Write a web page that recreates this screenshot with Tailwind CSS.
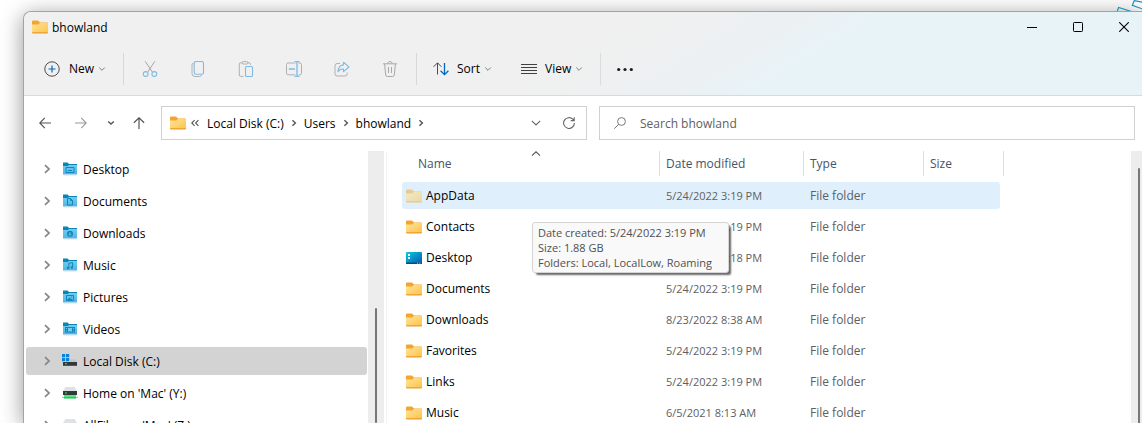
<!DOCTYPE html>
<html lang="en">
<head>
<meta charset="utf-8">
<title>bhowland</title>
<script src="https://cdn.jsdelivr.net/npm/@tailwindcss/browser@4"></script>
</head>
<body class="relative h-screen overflow-hidden bg-white pl-[23px] pt-[11px] font-['Open_Sans','Noto_Sans',sans-serif] text-[12px] leading-[15px] text-black">

<svg class="absolute h-0 w-0" aria-hidden="true">
  <defs>
    <linearGradient id="gold" x1="0" y1="0" x2="1" y2="1"><stop offset="0" stop-color="#ffe49c"/><stop offset="1" stop-color="#fdc347"/></linearGradient>
    <linearGradient id="blue" x1="0" y1="0" x2="0" y2="1"><stop offset="0" stop-color="#6fcdee"/><stop offset="1" stop-color="#4fb5e2"/></linearGradient>
    <linearGradient id="desk" x1="0" y1="0" x2="1" y2="1"><stop offset="0" stop-color="#0bcbe0"/><stop offset="1" stop-color="#0558ae"/></linearGradient>
    <symbol id="folder" viewBox="0 0 16 14">
      <path d="M0 1.5Q0 .4 1.1 .4H6L8 2.4H15Q16 2.4 16 3.4V6H0Z" fill="#f5a52d"/>
      <path d="M0 4.6H6.2L8 3H15.2Q16 3 16 3.8V13H0Z" fill="url(#gold)"/>
      <path d="M0 12.2H16V12.6Q16 13.4 15.2 13.4H.8Q0 13.4 0 12.6Z" fill="#e99a2c"/>
    </symbol>
    <symbol id="bluefolder" viewBox="0 0 14 14">
      <path d="M0 .6H4.6L6 2H14V5H0Z" fill="#0a86b6"/>
      <path d="M0 4H4.8L6 3H14V12.4H0Z" fill="url(#blue)"/>
      <path d="M.5 12.6H13.5V13.4H.5Z" fill="#c9d6dc"/>
    </symbol>
    <symbol id="right" viewBox="0 0 8 10"><path d="M2 1.2L6 5L2 8.8" fill="none" stroke="currentColor" stroke-width="1.7"/></symbol>
    <symbol id="crumb" viewBox="0 0 6 8"><path d="M1.4 1.2L4.4 4L1.4 6.8" fill="none" stroke="currentColor" stroke-width="1.4"/></symbol>
    <symbol id="down" viewBox="0 0 8 6"><path d="M1.2 1.5L4 4.3L6.8 1.5" fill="none" stroke="currentColor" stroke-width="1"/></symbol>
    <symbol id="netdrive" viewBox="0 0 16 14">
      <path d="M3.5 1H12.5L15 5H1Z" fill="#dfe2e4"/>
      <path d="M1 5H15V9H1Z" fill="#33383b"/><path d="M3 6.5H5V7.6H3Z" fill="#3fe26f"/>
      <path d="M2 9H14V12.6H2Z" fill="#2ecc5c"/><path d="M0 11.4H16" stroke="#7b8f83" stroke-width=".6"/><path d="M2 9.2H14V10.8H2Z" fill="#5bf08a"/>
    </symbol>
  </defs>
</svg>

<div class="relative flex h-full flex-col overflow-visible rounded-tl-lg border-l border-t border-[#a3a3a3] bg-white shadow-[0_4px_22px_rgba(0,0,0,0.42)]">
  <header class="rounded-tl-[7px] border-b border-[#d4dadd] bg-[linear-gradient(149deg,#f0f0f0_0%,#f0f0f0_50%,#ecf0f3_63%,#e8f3f8_68%)]">
    <div class="flex h-[30px] items-center">
      <svg class="ml-2 h-[14px] w-4"><use href="#folder"/></svg>
      <h1 class="ml-1 grow">bhowland</h1>
      <div class="flex h-full">
        <button aria-label="Minimize" class="flex w-[46px] items-center justify-center"><svg class="h-[10px] w-[10px]" viewBox="0 0 10 10" stroke="#000"><path d="M0 5.5H10"/></svg></button>
        <button aria-label="Maximize" class="flex w-[46px] items-center justify-center"><svg class="h-[10px] w-[10px]" viewBox="0 0 10 10" fill="none" stroke="#000"><rect x=".5" y=".5" width="9" height="9" rx=".8"/></svg></button>
        <button aria-label="Close" class="flex w-[41px] items-center pl-[18px]"><svg class="h-[10px] w-[10px]" viewBox="0 0 10 10" stroke="#000" stroke-width="1.1"><path d="M.2 .2L9.8 9.8M9.8 .2L.2 9.8"/></svg></button>
      </div>
    </div>
    <div role="toolbar" aria-label="Commands" class="flex h-[53px] items-center">
      <button class="flex h-8 w-[99px] items-center pl-5">
        <svg class="h-4 w-4" viewBox="0 0 16 16" fill="none"><circle cx="8" cy="8" r="7.2" stroke="#4c4c4c"/><path d="M8 4.5V11.5M4.5 8H11.5" stroke="#0067c0" stroke-width="1.2"/></svg>
        <span class="ml-[9px]">New</span>
        <svg class="ml-1 h-1.5 w-2 text-[#808080]"><use href="#down"/></svg>
      </button>
      <div class="mr-0.5 h-8 w-px bg-[#d9d9d9]"></div>
      <button aria-label="Cut" class="flex h-8 w-12 items-center justify-center"><svg class="h-4 w-4" viewBox="0 0 16 16" fill="none"><path d="M3.2 .3L10.4 11.2M12.8 .3L5.6 11.2" stroke="#a5a5a5"/><circle cx="3.7" cy="13" r="2.4" stroke="#7fbbe2" stroke-width="1.1"/><circle cx="12.3" cy="13" r="2.4" stroke="#7fbbe2" stroke-width="1.1"/></svg></button>
      <button aria-label="Copy" class="flex h-8 w-12 items-center justify-center"><svg class="h-4 w-4" viewBox="0 0 16 16" fill="none"><path d="M3.5 2Q2 2.3 2 4V12.5Q2 15.5 5 15.5H9.5Q11 15.5 11.5 14.2" stroke="#b0b0b0"/><rect x="4.2" y=".5" width="9.3" height="12.8" rx="1.8" stroke="#7fbbe2" stroke-width="1.1"/></svg></button>
      <button aria-label="Paste" class="flex h-8 w-12 items-center justify-center"><svg class="h-4 w-4" viewBox="0 0 16 16" fill="none"><path d="M4.5 1.8H2.7Q1.3 1.8 1.3 3.2V14Q1.3 15.4 2.7 15.4H5.5M9.5 1.8H11Q12.4 1.8 12.4 3.2V4" stroke="#b0b0b0"/><rect x="4" y=".6" width="6" height="2.4" rx="1.2" stroke="#b0b0b0"/><rect x="7.5" y="5.5" width="7" height="10" rx="1.2" stroke="#7fbbe2" stroke-width="1.1"/></svg></button>
      <button aria-label="Rename" class="flex h-8 w-12 items-center justify-center"><svg class="h-4 w-4" viewBox="0 0 16 16" fill="none"><path d="M9.3 2H2Q.5 2 .5 3.5V12.3Q.5 13.8 2 13.8H9.3M12.7 2H14Q15.5 2 15.5 3.5V12.3Q15.5 13.8 14 13.8H12.7" stroke="#b0b0b0"/><path d="M11 .6V15.4M8.5 .5H13.5M8.5 15.5H13.5M2.8 8H9" stroke="#7fbbe2" stroke-width="1.3"/></svg></button>
      <button aria-label="Share" class="flex h-8 w-12 items-center justify-center"><svg class="h-4 w-4" viewBox="0 0 16 16" fill="none"><path d="M6 2.5H3.2Q1 2.5 1 4.7V12.8Q1 15 3.2 15H11Q13.2 15 13.2 12.8V11.5" stroke="#b0b0b0"/><path d="M9.5 1.2L15 6L9.5 10.6V8Q6 7.6 4 10.8Q4.3 4.5 9.5 3.9Z" stroke="#7fbbe2" stroke-width="1.1" stroke-linejoin="round"/></svg></button>
      <button aria-label="Delete" class="flex h-8 w-12 items-center justify-center"><svg class="h-4 w-4" viewBox="0 0 16 16" fill="none" stroke="#a9a9a9"><path d="M1 2.8H15M5.8 2.5Q6 .5 8 .5T10.2 2.5M2.6 3L3.7 14Q3.9 15.5 5.4 15.5H10.6Q12.1 15.5 12.3 14L13.4 3M6.5 6V12M9.5 6V12"/></svg></button>
      <div class="ml-0.5 h-8 w-px bg-[#d9d9d9]"></div>
      <button class="flex h-8 w-[88px] items-center pl-4">
        <svg class="h-4 w-4" viewBox="0 0 16 16" fill="none"><path d="M4.5 13.5V2M.6 5.8L4.5 1.8L8.4 5.8" stroke="#4c4c4c"/><path d="M11.5 2V13.5M7.6 9.8L11.5 13.7L15.4 9.8" stroke="#0067c0" stroke-width="1.3"/></svg>
        <span class="ml-2">Sort</span>
        <svg class="ml-1 h-1.5 w-2 text-[#808080]"><use href="#down"/></svg>
      </button>
      <button class="flex h-8 w-[95px] items-center pl-4">
        <svg class="h-4 w-4" viewBox="0 0 16 16" stroke="#404040"><path d="M0 3.5H16M0 6.5H16M0 9.5H16M0 12.5H16"/></svg>
        <span class="ml-2">View</span>
        <svg class="ml-1 h-1.5 w-2 text-[#808080]"><use href="#down"/></svg>
      </button>
      <div class="h-8 w-px bg-[#d9dcde]"></div>
      <button aria-label="See more" class="flex h-8 w-12 items-center justify-center"><svg class="h-4 w-4" viewBox="0 0 16 16" fill="#1c1c1c"><circle cx="1.7" cy="8.5" r="1.6"/><circle cx="8" cy="8.5" r="1.6"/><circle cx="14.3" cy="8.5" r="1.6"/></svg></button>
    </div>
  </header>

  <div class="flex items-center pb-[11px] pl-[3px] pr-[7px] pt-[10px]">
    <button aria-label="Back" class="flex h-8 w-9 items-center justify-center"><svg class="h-3 w-3" viewBox="0 0 12 12" fill="none" stroke="#555" stroke-width="1.2"><path d="M12 6H.8M5.8 .9L.8 6L5.8 11.1"/></svg></button>
    <button aria-label="Forward" class="flex h-8 w-9 items-center justify-center"><svg class="h-3 w-3" viewBox="0 0 12 12" fill="none" stroke="#9a9a9a" stroke-width="1.1"><path d="M0 6H11.2M6.2 .9L11.2 6L6.2 11.1"/></svg></button>
    <button aria-label="Recent locations" class="flex h-8 w-6 items-center justify-center"><svg class="h-1.5 w-2" viewBox="0 0 8 6" fill="none" stroke="#555" stroke-width="1.4"><path d="M1.2 1.5L4 4.1L6.8 1.5"/></svg></button>
    <button aria-label="Up" class="mr-[6px] flex h-8 w-8 items-center justify-center"><svg class="h-3 w-3" viewBox="0 0 12 12" fill="none" stroke="#555" stroke-width="1.2"><path d="M6 12V.8M.9 5.8L6 .8L11.1 5.8"/></svg></button>
    <nav aria-label="Address" class="mr-3 flex h-[34px] flex-[416] items-center border border-[#d0d0d0] pl-2">
      <svg class="h-[14px] w-4"><use href="#folder"/></svg>
      <svg class="ml-[5px] h-2 w-2" viewBox="0 0 8 8" fill="none" stroke="#555" stroke-width="1.1"><path d="M3.6 1.2L.8 4L3.6 6.8M7.4 1.2L4.6 4L7.4 6.8"/></svg>
      <a href="#" class="ml-2">Local Disk (C:)</a>
      <svg class="mx-[7px] h-2 w-1.5 text-[#555]"><use href="#crumb"/></svg>
      <a href="#">Users</a>
      <svg class="mx-[7px] h-2 w-1.5 text-[#555]"><use href="#crumb"/></svg>
      <a href="#">bhowland</a>
      <svg class="mx-[7px] h-2 w-1.5 text-[#555]"><use href="#crumb"/></svg>
      <button aria-label="Previous locations" class="ml-auto flex h-full w-8 items-center justify-center"><svg class="h-1.5 w-2.5" viewBox="0 0 10 6" fill="none" stroke="#666" stroke-width="1.1"><path d="M.8 .8L5 5L9.2 .8"/></svg></button>
      <button aria-label="Refresh" class="flex h-full w-[34px] items-center justify-center"><svg class="h-3 w-3" viewBox="0 0 12 12" fill="none" stroke="#666" stroke-width="1.1"><path d="M11.4 6A5.4 5.4 0 1 1 9.8 2.2L11 3.4M11.2 .2V3.6H7.8"/></svg></button>
    </nav>
    <label class="flex h-[34px] flex-[520] items-center border border-[#d0d0d0] pl-[14px]">
      <svg class="h-3 w-3" viewBox="0 0 12 12" fill="none" stroke="#777"><circle cx="7.5" cy="4.5" r="3.9"/><path d="M4.7 7.3L.3 11.7"/></svg>
      <input type="search" aria-label="Search bhowland" placeholder="Search bhowland" class="ml-[14px] min-w-0 grow outline-none placeholder:text-[#606060]">
    </label>
  </div>

  <div class="flex min-h-0 grow">
    <nav aria-label="Folders" class="w-[344px] shrink-0 overflow-hidden pt-1">
      <ul class="pl-0.5 pr-px">
        <li class="pb-1"><a href="#" class="flex h-7 items-center pl-[17px]"><svg class="h-2.5 w-2 text-[#858585]"><use href="#right"/></svg><svg class="ml-3 mr-1.5 h-[14px] w-[14px]" viewBox="0 0 14 14"><use href="#bluefolder"/><path d="M3 5.5H11V10.5H3ZM5 8.5H9" fill="none" stroke="#1384c0"/></svg>Desktop</a></li>
        <li class="pb-1"><a href="#" class="flex h-7 items-center pl-[17px]"><svg class="h-2.5 w-2 text-[#858585]"><use href="#right"/></svg><svg class="ml-3 mr-1.5 h-[14px] w-[14px]" viewBox="0 0 14 14"><use href="#bluefolder"/><path d="M4.5 4.5H7.5L9.5 6.5V11H4.5ZM7.5 4.5V6.5H9.5" fill="none" stroke="#1384c0"/></svg>Documents</a></li>
        <li class="pb-1"><a href="#" class="flex h-7 items-center pl-[17px]"><svg class="h-2.5 w-2 text-[#858585]"><use href="#right"/></svg><svg class="ml-3 mr-1.5 h-[14px] w-[14px]" viewBox="0 0 14 14"><use href="#bluefolder"/><circle cx="7" cy="7.8" r="3" fill="#1384c0"/><path d="M7 6V9.2M5.6 8L7 9.4L8.4 8" fill="none" stroke="#7bd0f0" stroke-width=".8"/></svg>Downloads</a></li>
        <li class="pb-1"><a href="#" class="flex h-7 items-center pl-[17px]"><svg class="h-2.5 w-2 text-[#858585]"><use href="#right"/></svg><svg class="ml-3 mr-1.5 h-[14px] w-[14px]" viewBox="0 0 14 14"><use href="#bluefolder"/><path d="M5.8 10V5.2L9.6 4.6V9.4" fill="none" stroke="#1384c0"/><circle cx="5" cy="10" r="1.2" fill="#1384c0"/><circle cx="8.8" cy="9.4" r="1.2" fill="#1384c0"/></svg>Music</a></li>
        <li class="pb-1"><a href="#" class="flex h-7 items-center pl-[17px]"><svg class="h-2.5 w-2 text-[#858585]"><use href="#right"/></svg><svg class="ml-3 mr-1.5 h-[14px] w-[14px]" viewBox="0 0 14 14"><use href="#bluefolder"/><path d="M3.5 5.5H10.5V10.5H3.5Z" fill="none" stroke="#1384c0"/><path d="M4 10L6.5 7.5L9.5 10Z" fill="#1384c0"/><circle cx="8.6" cy="7" r=".6" fill="#1384c0"/></svg>Pictures</a></li>
        <li class="pb-1"><a href="#" class="flex h-7 items-center pl-[17px]"><svg class="h-2.5 w-2 text-[#858585]"><use href="#right"/></svg><svg class="ml-3 mr-1.5 h-[14px] w-[14px]" viewBox="0 0 14 14"><use href="#bluefolder"/><path d="M2 5H12V10.6H2Z" fill="#1384c0"/><path d="M5 6H9V9.6H5ZM3 6H4V7H3ZM3 8.6H4V9.6H3ZM10 6H11V7H10ZM10 8.6H11V9.6H10Z" fill="#6fcdee"/></svg>Videos</a></li>
        <li class="pb-1"><a href="#" aria-current="true" class="flex h-7 items-center rounded-[3px] bg-[#d3d3d3] pl-[17px]"><svg class="h-2.5 w-2 text-[#858585]"><use href="#right"/></svg><svg class="ml-[11px] mr-1.5 h-[14px] w-[15px]" viewBox="0 0 15 14"><path d="M0 0H3.2V3.2H0ZM4 0H7.2V3.2H4ZM0 4H3.2V7.2H0ZM4 4H7.2V7.2H4Z" fill="#0883d9"/><path d="M8 5.2H13L15 8H1V7.6H8Z" fill="#c3c6c8"/><path d="M1 8H15V11.8H1Z" fill="#33383b"/><path d="M3 9.2H5V10.3H3Z" fill="#3fe26f"/></svg>Local Disk (C:)</a></li>
        <li class="pb-1"><a href="#" class="flex h-7 items-center pl-[17px]"><svg class="h-2.5 w-2 text-[#858585]"><use href="#right"/></svg><svg class="ml-[11px] mr-[5px] h-[14px] w-4"><use href="#netdrive"/></svg>Home on 'Mac' (Y:)</a></li>
        <li class="pb-1"><a href="#" class="flex h-7 items-center pl-[17px]"><svg class="h-2.5 w-2 text-[#858585]"><use href="#right"/></svg><svg class="ml-[11px] mr-[5px] h-[14px] w-4"><use href="#netdrive"/></svg>AllFiles on 'Mac' (Z:)</a></li>
      </ul>
    </nav>
    <div class="w-4 shrink-0 bg-[#ededed] pt-[157px]"><div class="mx-auto h-full w-0.5 rounded bg-[#777]"></div></div>
    <main class="relative ml-0.5 min-w-0 grow overflow-hidden border-l border-[#f3f3f3] pl-[15px]">
      <table class="w-[602px] table-fixed border-collapse text-left text-[#606060]">
        <colgroup><col class="w-[258px]"><col class="w-[144px]"><col class="w-[120px]"><col class="w-20"></colgroup>
        <thead class="text-[#44546c]">
          <tr>
            <th class="p-0 pb-1 font-normal"><div class="relative flex h-[25px] items-center border-r border-[#dedede] pl-4">Name<svg class="absolute left-[129px] top-0 h-1.5 w-2.5" viewBox="0 0 10 6" fill="none" stroke="#555" stroke-width="1.1"><path d="M1 4.6L5 .8L9 4.6"/></svg></div></th>
            <th class="p-0 pb-1 font-normal"><div class="flex h-[25px] items-center border-r border-[#dedede] pl-1.5">Date modified</div></th>
            <th class="p-0 pb-1 font-normal"><div class="flex h-[25px] items-center border-r border-[#dedede] pl-1.5">Type</div></th>
            <th class="p-0 pb-1 font-normal"><div class="flex h-[25px] items-center border-r border-[#dedede] pl-1.5">Size</div></th>
          </tr>
        </thead>
        <tbody>
          <tr>
            <td class="p-0 py-0.5"><div class="flex h-[27px] items-center rounded-l-[3px] bg-[#dff0fc] pl-1 text-black"><svg class="mr-1 h-[14px] w-4 opacity-50"><use href="#folder"/></svg>AppData</div></td>
            <td class="p-0 py-0.5"><div class="flex h-[27px] items-center bg-[#dff0fc] pl-1.5 text-[11px]">5/24/2022 3:19 PM</div></td>
            <td class="p-0 py-0.5"><div class="flex h-[27px] items-center bg-[#dff0fc] pl-1.5">File folder</div></td>
            <td class="p-0 py-0.5"><div class="mr-1 h-[27px] rounded-r-[3px] bg-[#dff0fc]"></div></td>
          </tr>
          <tr><td class="p-0 py-0.5"><div class="flex h-[27px] items-center pl-1 text-black"><svg class="mr-1 h-[14px] w-4"><use href="#folder"/></svg>Contacts</div></td><td class="p-0 pl-1.5 text-[11px]">5/24/2022 3:19 PM</td><td class="p-0 pl-1.5">File folder</td><td></td></tr>
          <tr><td class="p-0 py-0.5"><div class="flex h-[27px] items-center pl-1 text-black"><svg class="mr-1 h-[14px] w-4" viewBox="0 0 16 14"><rect y="1" width="16" height="12" rx=".8" fill="url(#desk)"/><path d="M2 3H4V5H2ZM2 6H4V8H2Z" fill="#fff"/><path d="M0 11.4H16V12.2Q16 13 15.2 13H.8Q0 13 0 12.2Z" fill="#064a86"/><path d="M11 11.7H12V12.5H11ZM13.4 11.7H14.4V12.5H13.4Z" fill="#fff"/></svg>Desktop</div></td><td class="p-0 pl-1.5 text-[11px]">5/24/2022 3:18 PM</td><td class="p-0 pl-1.5">File folder</td><td></td></tr>
          <tr><td class="p-0 py-0.5"><div class="flex h-[27px] items-center pl-1 text-black"><svg class="mr-1 h-[14px] w-4"><use href="#folder"/></svg>Documents</div></td><td class="p-0 pl-1.5 text-[11px]">5/24/2022 3:19 PM</td><td class="p-0 pl-1.5">File folder</td><td></td></tr>
          <tr><td class="p-0 py-0.5"><div class="flex h-[27px] items-center pl-1 text-black"><svg class="mr-1 h-[14px] w-4"><use href="#folder"/></svg>Downloads</div></td><td class="p-0 pl-1.5 text-[11px]">8/23/2022 8:38 AM</td><td class="p-0 pl-1.5">File folder</td><td></td></tr>
          <tr><td class="p-0 py-0.5"><div class="flex h-[27px] items-center pl-1 text-black"><svg class="mr-1 h-[14px] w-4"><use href="#folder"/></svg>Favorites</div></td><td class="p-0 pl-1.5 text-[11px]">5/24/2022 3:19 PM</td><td class="p-0 pl-1.5">File folder</td><td></td></tr>
          <tr><td class="p-0 py-0.5"><div class="flex h-[27px] items-center pl-1 text-black"><svg class="mr-1 h-[14px] w-4"><use href="#folder"/></svg>Links</div></td><td class="p-0 pl-1.5 text-[11px]">5/24/2022 3:19 PM</td><td class="p-0 pl-1.5">File folder</td><td></td></tr>
          <tr><td class="p-0 py-0.5"><div class="flex h-[27px] items-center pl-1 text-black"><svg class="mr-1 h-[14px] w-4"><use href="#folder"/></svg>Music</div></td><td class="p-0 pl-1.5 text-[11px]">6/5/2021 8:13 AM</td><td class="p-0 pl-1.5">File folder</td><td></td></tr>
        </tbody>
      </table>
      <div role="tooltip" class="absolute left-[145px] top-[71px] whitespace-nowrap rounded-[3px] border border-[#d5d5d5] bg-[#f9f9f9] py-0.5 pl-[5px] pr-4 text-[11px] text-[#505050] shadow-[3px_3px_2px_-1px_rgba(0,0,0,0.6)]">
        Date created: 5/24/2022 3:19 PM<br>Size: 1.88 GB<br>Folders: Local, LocalLow, Roaming
      </div>
    </main>
    <div class="w-[11px] shrink-0 bg-[#ededed] pl-[7px] pt-[17px]"><div class="h-full w-0.5 rounded-t bg-[#777]"></div></div>
  </div>

</div>
<svg class="absolute right-0 top-0 h-[11px] w-[28px]" viewBox="0 0 28 11" fill="none" stroke="#2191bd" stroke-width="1.2" aria-hidden="true"><path d="M3 12L4.6 7.5L17.5 11.5M28 8.8L18.3 5.4L20.3 .6L30 2.6"/></svg>
</body>
</html>
